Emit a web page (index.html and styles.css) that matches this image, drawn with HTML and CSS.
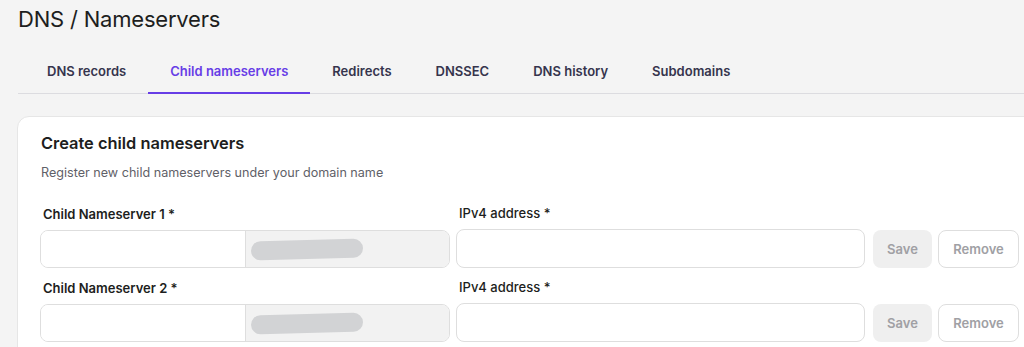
FILE: index.html
```html
<!DOCTYPE html>
<html lang="en">
<head>
    <meta charset="UTF-8">
    <meta name="viewport" content="width=device-width, initial-scale=1.0">
    <title>DNS / Nameservers</title>
    <link rel="stylesheet" href="styles.css">
</head>
<body>
    <div class="page">
        <h1 class="page-title">DNS / Nameservers</h1>

        <nav class="tabs">
            <a href="#" class="tab">DNS records</a>
            <a href="#" class="tab active">Child nameservers</a>
            <a href="#" class="tab">Redirects</a>
            <a href="#" class="tab">DNSSEC</a>
            <a href="#" class="tab">DNS history</a>
            <a href="#" class="tab">Subdomains</a>
        </nav>

        <div class="card">
            <h2 class="card-title">Create child nameservers</h2>
            <p class="card-subtitle">Register new child nameservers under your domain name</p>

            <div class="ns-row">
                <div class="field field-name">
                    <label class="field-label">Child Nameserver 1 *</label>
                    <div class="input-group">
                        <input type="text" class="input-left">
                        <div class="input-suffix"><span class="redacted"></span></div>
                    </div>
                </div>
                <div class="field field-ip">
                    <label class="field-label">IPv4 address *</label>
                    <input type="text" class="input">
                </div>
                <button class="btn btn-save">Save</button>
                <button class="btn btn-remove">Remove</button>
            </div>

            <div class="ns-row">
                <div class="field field-name">
                    <label class="field-label">Child Nameserver 2 *</label>
                    <div class="input-group">
                        <input type="text" class="input-left">
                        <div class="input-suffix"><span class="redacted"></span></div>
                    </div>
                </div>
                <div class="field field-ip">
                    <label class="field-label">IPv4 address *</label>
                    <input type="text" class="input">
                </div>
                <button class="btn btn-save">Save</button>
                <button class="btn btn-remove">Remove</button>
            </div>
        </div>
    </div>
</body>
</html>
```

FILE: styles.css
```css
body {
    font-family: Inter, "Noto Sans", sans-serif;
    margin: 0;
    padding: 0;
    background-color: #f4f4f4;
    color: #1d1e20;
}
.page {
    padding-left: 18px;
    height: 347px;
    overflow: hidden;
}
.page-title {
    font-size: 22px;
    font-weight: 400;
    line-height: 28px;
    margin: 5px 0 0;
    letter-spacing: -0.2px;
}
.tabs {
    display: flex;
    margin-top: 13px;
    padding-left: 7px;
    border-bottom: 1px solid #dcdce0;
}
.tab {
    padding: 15px 22px 11px;
    line-height: 20px;
    font-size: 13px;
    font-weight: 600;
    color: #36344d;
    text-decoration: none;
    border-bottom: 2px solid transparent;
    margin-bottom: -1px;
}
.tab.active {
    color: #673de6;
    border-bottom-color: #673de6;
}
.card {
    margin-top: 22px;
    margin-left: -1px;
    width: 1040px;
    background-color: #fff;
    border: 1px solid #e6e6e6;
    border-radius: 12px;
    padding: 14px 23px 20px;
}
.card-title {
    font-size: 16.4px;
    font-weight: 600;
    line-height: 24px;
    margin: 0;
}
.card-subtitle {
    font-size: 12.6px;
    line-height: 20px;
    color: #5f6168;
    margin: 8px 0 0;
}
.ns-row {
    display: flex;
    align-items: flex-end;
    margin-top: 20px;
    margin-left: -1px;
}
.ns-row + .ns-row {
    margin-top: 9px;
}
.field {
    display: flex;
    flex-direction: column;
}
.field-label {
    font-size: 13px;
    font-weight: 600;
    line-height: 20px;
    padding-left: 3px;
    margin-bottom: 6px;
}
.field-ip .field-label {
    font-weight: 500;
}
.field-name {
    width: 410px;
}
.field-ip {
    width: 409px;
    margin-left: 6px;
}
.input-group {
    display: flex;
    height: 38px;
    border: 1px solid #dedede;
    border-radius: 8px;
    overflow: hidden;
    box-sizing: border-box;
}
.input-left {
    width: 204px;
    border: 0;
    border-right: 1px solid #dedede;
    padding: 0;
    outline: none;
}
.input-suffix {
    flex: 1;
    background-color: #f2f2f2;
    display: flex;
    align-items: center;
    padding-left: 5px;
}
.redacted {
    width: 112px;
    height: 19px;
    border-radius: 10px;
    background-color: #d2d3d5;
    transform: rotate(-1.5deg);
}
.input {
    height: 39px;
    box-sizing: border-box;
    border: 1px solid #dedede;
    border-radius: 8px;
    outline: none;
}
.btn {
    height: 38px;
    box-sizing: border-box;
    border-radius: 8px;
    font-family: inherit;
    font-size: 13px;
    font-weight: 600;
    color: #a0a0a4;
}
.btn-save {
    width: 59px;
    margin-left: 8px;
    border: 0;
    background-color: #efefef;
}
.btn-remove {
    width: 81px;
    margin-left: 6px;
    border: 1px solid #dedede;
    background-color: #fff;
}
```
